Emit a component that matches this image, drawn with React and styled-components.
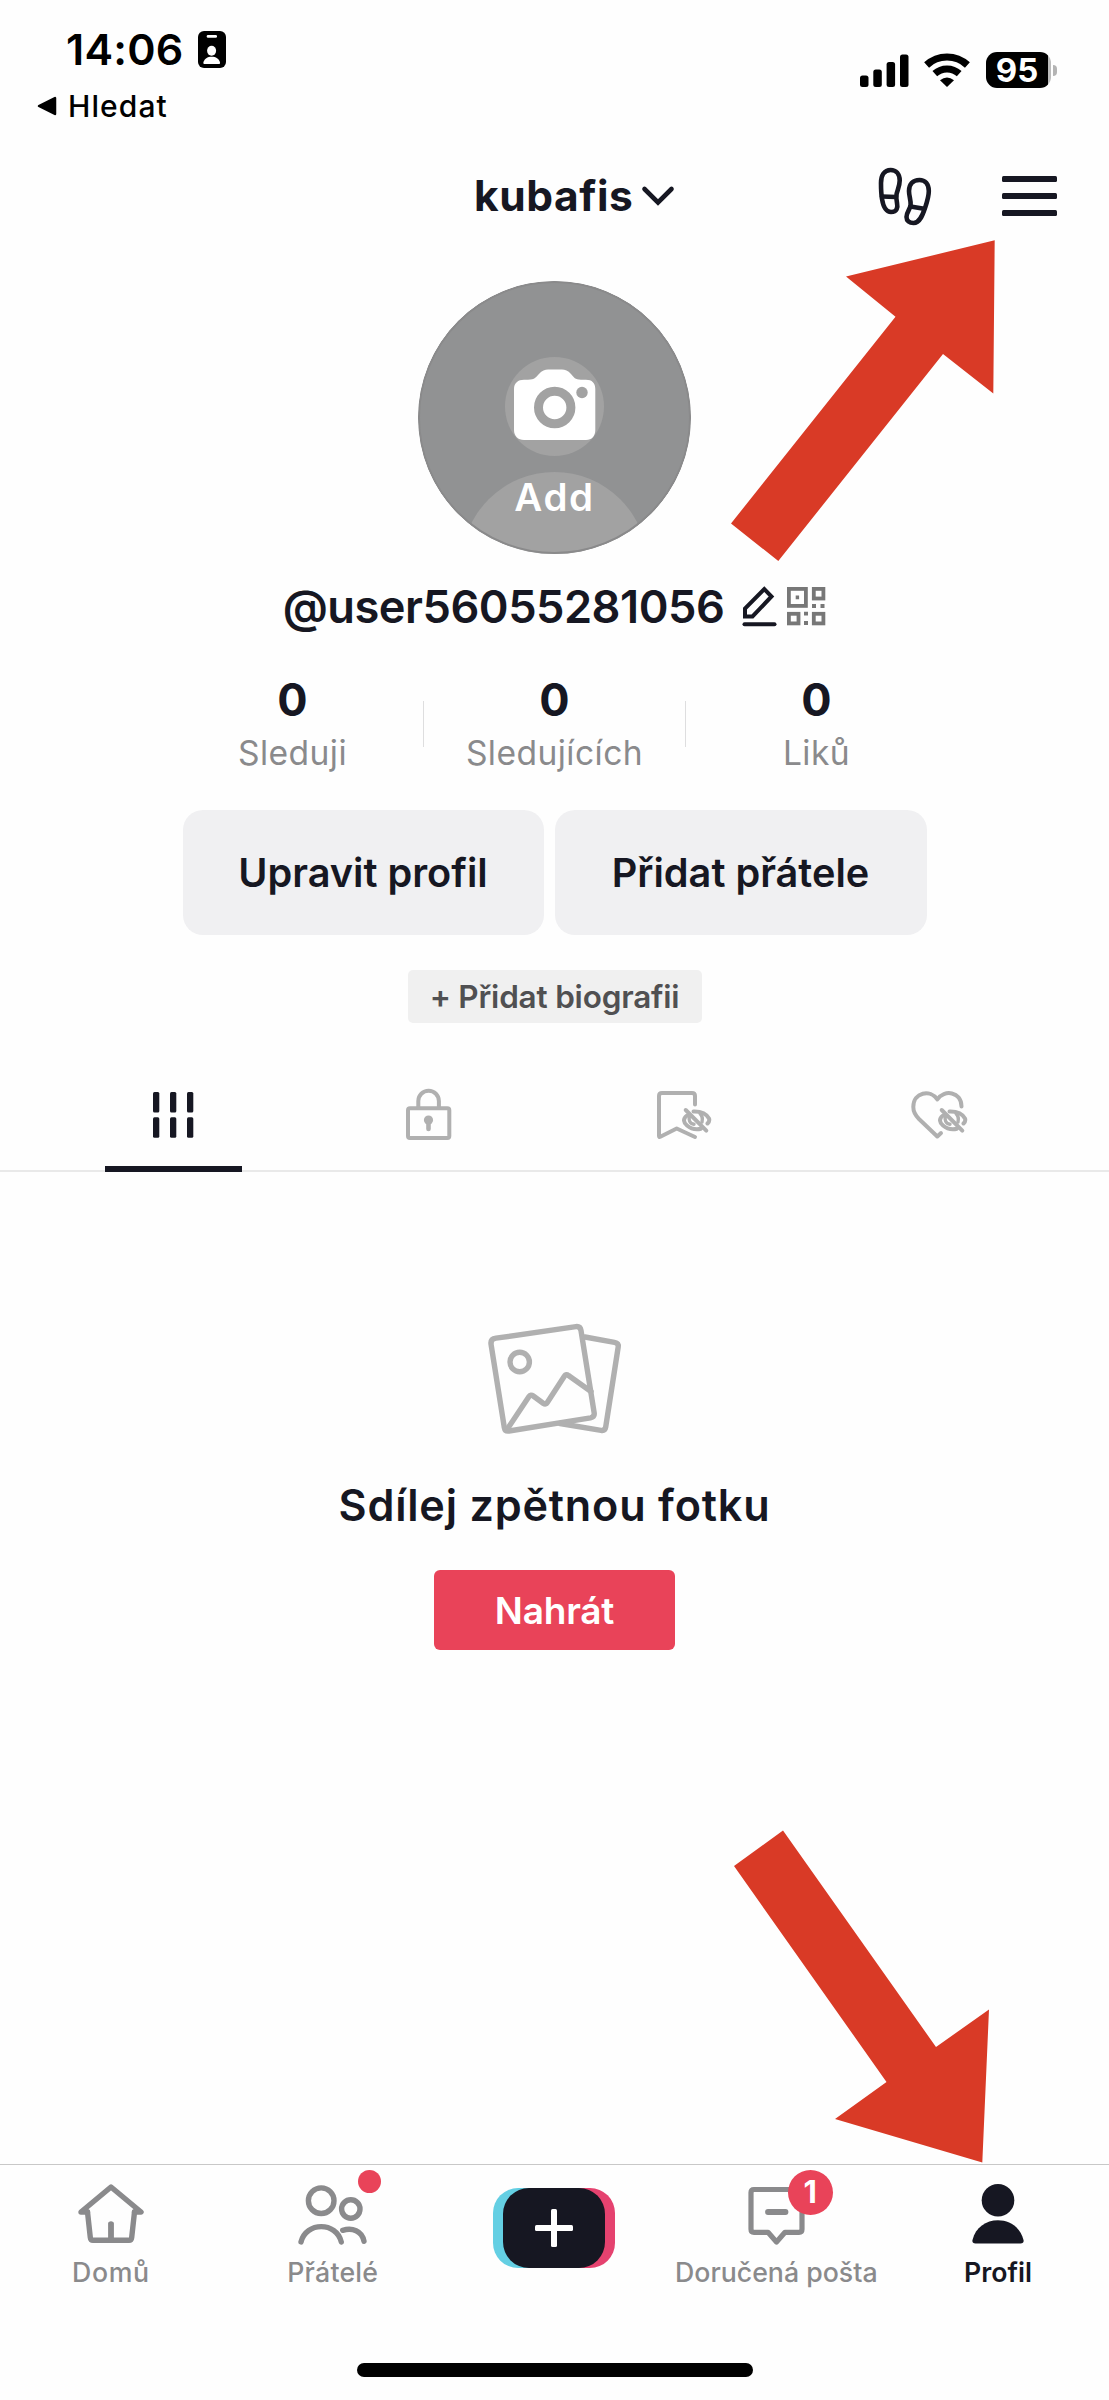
import React from 'react';
import styled, { createGlobalStyle } from 'styled-components';

const ink = '#161722';
const grey = '#8a8a8c';
const faint = '#b0b0b0';
const red = '#e94359';

const GlobalStyle = createGlobalStyle`
  * { box-sizing: border-box; }
  body {
    margin: 0;
    background: #fefefe;
    color: ${ink};
    font-family: Inter, "Liberation Sans", sans-serif;
    font-variant-ligatures: none;
  }
  button { border: 0; padding: 0; background: none; font: inherit; color: inherit; }
  svg { display: block; flex: none; }
`;

const Screen = styled.div`
  position: relative;
  display: flex;
  flex-direction: column;
  width: 1109px;
  height: 2400px;
  overflow: hidden;
`;

/* Status bar */
const StatusBar = styled.header`
  display: flex;
  justify-content: space-between;
  height: 140px;
  padding: 24px 52px 0 37px;
  color: #000;
`;
const StatusLeft = styled.div`
  display: flex;
  flex-direction: column;
  gap: 12px;
`;
const Clock = styled.div`
  display: flex;
  align-items: center;
  gap: 15px;
  height: 50px;
  padding-left: 29px;
  font-size: 43px;
  font-weight: 600;
  letter-spacing: 0.2px;
`;
const BackLink = styled.div`
  display: flex;
  align-items: center;
  gap: 11px;
  height: 40px;
  font-size: 30px;
  font-weight: 500;
  letter-spacing: 1.1px;
`;
const StatusRight = styled.div`
  display: flex;
  align-items: center;
  height: 40px;
  margin-top: 26px;
`;
const Battery = styled.div`
  display: flex;
  align-items: center;
  justify-content: center;
  width: 65px;
  height: 36px;
  padding-right: 3px;
  margin-left: 16px;
  border-radius: 11px;
  background: linear-gradient(to right, #000 62px, #bbb 62px);
  color: #fff;
  font-size: 33px;
  font-weight: 700;
  line-height: 36px;
`;
const BatteryNub = styled.div`
  width: 4px;
  height: 11px;
  margin: 0 0 0 2px;
  border-radius: 0 5px 5px 0;
  background: #b4b4b4;
`;

/* Top bar */
const TopBar = styled.div`
  display: flex;
  align-items: center;
  height: 112px;
  padding: 0 52px 0 474px;
`;
const AccountSwitch = styled.button`
  display: flex;
  align-items: center;
  gap: 8px;
  font-size: 42.5px;
  font-weight: 700;
  line-height: 50px;
  letter-spacing: 0.55px;
`;
const TopActions = styled.div`
  display: flex;
  align-items: center;
  gap: 70px;
  margin-left: auto;
`;

/* Profile */
const Profile = styled.section`
  display: flex;
  flex-direction: column;
  align-items: center;
`;
const Avatar = styled.button`
  position: relative;
  display: flex;
  flex-direction: column;
  align-items: center;
  width: 273px;
  height: 273px;
  margin-top: 29px;
  padding-top: 88px;
  border-radius: 50%;
  overflow: hidden;
  color: #fff;
`;
const AvatarBackdrop = styled.svg`
  position: absolute;
  inset: 0;
`;
const CameraIcon = styled.svg`
  position: relative;
`;
const AvatarLabel = styled.span`
  position: relative;
  margin-top: 31px;
  font-size: 38.5px;
  font-weight: 600;
  line-height: 50px;
  letter-spacing: 1.6px;
`;
const HandleRow = styled.div`
  display: flex;
  align-items: center;
  gap: 8px;
  height: 60px;
  margin-top: 22px;
`;
const Handle = styled.span`
  margin-right: 9px;
  font-size: 45.2px;
  font-weight: 600;
  letter-spacing: -0.5px;
`;
const Stats = styled.div`
  display: flex;
  margin-top: 39px;
`;
const Stat = styled.div`
  display: flex;
  flex-direction: column;
  align-items: center;
  width: 261px;
`;
const StatValue = styled.span`
  font-size: 45px;
  font-weight: 700;
  line-height: 49px;
`;
const StatLabel = styled.span`
  color: ${grey};
  font-size: 33.6px;
  line-height: 57px;
  letter-spacing: 0.45px;
`;
const StatDivider = styled.div`
  width: 1px;
  height: 46px;
  margin-top: 26px;
  background: #dededf;
`;
const Actions = styled.div`
  display: flex;
  gap: 11px;
  margin-top: 29px;
`;
const ActionButton = styled.button`
  width: ${(p) => (p.$wide ? 372 : 361)}px;
  height: 125px;
  border-radius: 20px;
  background: #f0f0f2;
  font-size: 39.7px;
  font-weight: 600;
`;
const BioButton = styled.button`
  width: 294px;
  height: 53px;
  margin-top: 35px;
  border-radius: 5px;
  background: #f0f0f0;
  color: #505052;
  font-size: 31.5px;
  font-weight: 600;
  letter-spacing: -0.2px;
`;

/* Content tabs */
const Tabs = styled.div`
  display: flex;
  height: 130px;
  margin-top: 19px;
  padding: 0 43px 0 46px;
  border-bottom: 2px solid #e9e9e9;
`;
const Tab = styled.button`
  display: flex;
  flex: 1;
  flex-direction: column;
  align-items: center;
  justify-content: space-between;
  height: 130px;
  padding-top: 46px;
`;
const TabIcon = styled.div`
  display: flex;
  align-items: center;
  height: 54px;
`;
const TabIndicator = styled.div`
  width: 137px;
  height: 6px;
  background: ${ink};
`;

/* Empty state */
const EmptyState = styled.section`
  display: flex;
  flex: 1;
  flex-direction: column;
  align-items: center;
  padding-top: 150px;
`;
const EmptyTitle = styled.h2`
  margin: 45px 0 40px;
  font-size: 43.2px;
  font-weight: 600;
  line-height: 50px;
  letter-spacing: 0.8px;
`;
const UploadButton = styled.button`
  width: 241px;
  height: 80px;
  border-radius: 6px;
  background: ${red};
  color: #fff;
  font-size: 37px;
  font-weight: 600;
  letter-spacing: -0.2px;
`;

/* Bottom navigation */
const BottomBar = styled.footer`
  display: flex;
  flex-direction: column;
  align-items: center;
  height: 236px;
  border-top: 1px solid #c8c8c8;
`;
const NavRow = styled.nav`
  display: flex;
  width: 100%;
  height: 198px;
`;
const NavItem = styled.button`
  display: flex;
  flex: 1;
  flex-direction: column;
  align-items: center;
  padding-top: 15px;
  color: ${(p) => (p.$active ? ink : grey)};
  white-space: nowrap;
`;
const NavIcon = styled.div`
  position: relative;
`;
const NavLabel = styled.span`
  margin-top: 6px;
  font-size: 26.7px;
  font-weight: ${(p) => (p.$active ? 600 : 500)};
  line-height: 36px;
  letter-spacing: ${(p) => p.$spacing || 0}px;
`;
const Dot = styled.span`
  position: absolute;
  top: -10px;
  left: 60px;
  width: 23px;
  height: 23px;
  border-radius: 50%;
  background: ${red};
`;
const Count = styled.span`
  position: absolute;
  top: -10.5px;
  left: 40px;
  width: 45px;
  height: 45px;
  border-radius: 50%;
  background: ${red};
  color: #fff;
  font-size: 31px;
  font-weight: 700;
  line-height: 44px;
  text-align: center;
`;
const CreateButton = styled.span`
  display: block;
  margin-top: 8px;
  padding: 0 10px;
  border-radius: 25px;
  background: linear-gradient(to right, #64cfe3 50%, #e5426f 50%);
`;
const CreateFace = styled.span`
  display: flex;
  align-items: center;
  justify-content: center;
  width: 102px;
  height: 80px;
  border-radius: 26px;
  background: ${ink};
`;
const HomeIndicator = styled.div`
  width: 396px;
  height: 14px;
  border-radius: 7px;
  background: #000;
`;

const Pointers = styled.svg`
  position: absolute;
  inset: 0;
  pointer-events: none;
`;

const line = (color, width) => ({
  fill: 'none',
  stroke: color,
  strokeWidth: width,
  strokeLinecap: 'round',
  strokeLinejoin: 'round',
});

const IdBadge = () => (
  <svg width="28" height="37" viewBox="0 0 28 37">
    <rect width="28" height="37" rx="6" />
    <rect x="8.7" y="4" width="10.3" height="2.8" rx="1.3" fill="#fff" />
    <ellipse cx="13.6" cy="19.7" rx="4.5" ry="5" fill="#fff" />
    <path d="M6.5 33c-1 0-1.3-.6-1.1-1.500C6.300 27.500 9.500 25.700 13.700 25.700s7.400 1.800 8.300 5.800c.2.9-.1 1.500-1.100 1.500z" fill="#fff" />
  </svg>
);

const BackTriangle = () => (
  <svg width="20" height="20" viewBox="0 0 20 20">
    <path d="M2 10 18 2v16z" stroke="#000" strokeWidth="2.500" strokeLinejoin="round" />
  </svg>
);

const Signal = () => (
  <svg width="49" height="33" viewBox="0 0 49 33">
    <rect y="21.500" width="8.500" height="11.500" rx="2.500" />
    <rect x="13.300" y="15.500" width="8.500" height="17.500" rx="2.500" />
    <rect x="26.600" y="8" width="8.500" height="25" rx="2.500" />
    <rect x="40" y="0.500" width="8.500" height="32.500" rx="2.500" />
  </svg>
);

const WifiMark = styled.svg`
  margin-left: 15px;
`;
const Wifi = () => (
  <WifiMark width="46" height="35" viewBox="0 0 46 35">
    <path d="M2.600 12A30 30 0 0 1 43.400 12" fill="none" stroke="#000" strokeWidth="7.200" />
    <path d="M10.800 20.600A18.200 18.200 0 0 1 35.200 20.600" fill="none" stroke="#000" strokeWidth="7" />
    <path d="M23 34 16 27.300Q23 21.500 30 27.300z" />
  </WifiMark>
);

const Chevron = () => (
  <svg width="34" height="24" viewBox="0 0 34 24">
    <path d="M3.500 5 17 18.500 30.500 5" fill="none" stroke={ink} strokeWidth="4.600" strokeLinecap="round" />
  </svg>
);

const Footprints = () => (
  <svg width="54" height="60" viewBox="0 0 54 60" {...line(ink, 4.6)}>
    <path d="M12.700 4C6 4 3 10 3 17c0 6 .2 11 1 16 1 6 3 13 9 13s7-4.500 6-9c-.7-3.500-1-6-.4-9 .9-4 3.100-8 3.100-13.500C21.700 8 18 4 12.700 4z" />
    <path d="M4 30.500l14 .5" />
    <path d="M41.500 14C35 14 31 18 31 25c0 5 2 9 1.600 14-.3 4-4.100 7-4.100 12 0 4 3 6 7 6 6.500 0 9.500-9 11.500-15s3.800-11 3.800-17c0-7-3.800-11-9.300-11z" />
    <path d="M32.500 40.500l13.500 2.300" />
  </svg>
);

const MenuIcon = () => (
  <svg width="55" height="40" viewBox="0 0 55 40" fill={ink}>
    <rect width="55" height="6" rx="1.500" />
    <rect y="17" width="55" height="6" rx="1.500" />
    <rect y="34" width="55" height="6" rx="1.500" />
  </svg>
);

const Pencil = () => (
  <svg width="38" height="42" viewBox="0 0 38 42" {...line(ink, 4)}>
    <path d="M4 31.500V23.500L23.300 4 30.500 11.500 11.500 31.500z" strokeLinejoin="miter" />
    <path d="M3.500 39.300H33.500" />
  </svg>
);

const QrCode = () => (
  <svg width="39" height="39" viewBox="0 0 39 39" fill="none" stroke="#777" strokeWidth="3.800">
    <rect x="1.900" y="1.900" width="17" height="17" />
    <rect x="26.800" y="1.900" width="9.600" height="9.600" />
    <rect x="1.900" y="26.800" width="9.600" height="9.600" />
    <rect x="26.800" y="26.800" width="9.600" height="9.600" />
    <path d="M8.700 10.400h3.400M25 19h4M33.500 19h4M17 26.700h4M17 36h4" />
  </svg>
);

const GridIcon = () => (
  <svg width="41" height="46" viewBox="0 0 41 46" fill={ink}>
    {[0, 17, 34].map((x) => (
      <React.Fragment key={x}>
        <rect x={x} width="6.300" height="20.500" rx="1.500" />
        <rect x={x} y="25.300" width="6.300" height="20.500" rx="1.500" />
      </React.Fragment>
    ))}
  </svg>
);

const LockIcon = () => (
  <svg width="47" height="54" viewBox="0 0 47 54" {...line(faint, 4)}>
    <rect x="3" y="20.300" width="41.300" height="29.800" rx="2" />
    <path d="M13.300 20V13a10.300 10.300 0 0 1 20.600 0V20" />
    <circle cx="23.500" cy="32" r="4.600" fill={faint} stroke="none" />
    <path d="M23.500 33V41" strokeWidth="4.600" />
  </svg>
);

const HiddenEye = ({ x = 0 }) => (
  <g transform={`translate(${x} 0)`}>
    <path d="M29.700 22 50.300 42.700" />
    <path d="M31 27.500C26.500 31 27.500 34.500 31 37.500 35 41 39.500 42 45 40.800" />
    <path d="M37.500 23.500C45 23.300 50.500 26 53 30.500 53.800 32.500 53 34 51.500 35.500" />
    <path d="M33.500 27.500C32.500 32 33.500 35.800 38 36.200" strokeWidth="3.400" />
    <path d="M44 25.500C46.500 28 46.700 31 46 34" strokeWidth="3.400" />
  </g>
);

const BookmarkHidden = () => (
  <svg width="56" height="54" viewBox="0 0 56 54" {...line(faint, 4)}>
    <path d="M39 16.500V8q0-3-3-3H6Q3 5 3 8V48q0 1.500 1.300.8L20.700 40.500 39 49" />
    <HiddenEye />
  </svg>
);

const HeartHidden = () => (
  <svg width="58" height="54" viewBox="0 0 58 54" {...line(faint, 4)}>
    <path d="M51.500 18.500C51.500 3.500 34 1 27.300 11.500 20.500 1 3.300 4 3.300 19 3.300 24.500 5.500 27.500 9 31L27.300 48.500 31 45" />
    <HiddenEye x={2} />
  </svg>
);

const GalleryIcon = () => (
  <svg width="136" height="113" viewBox="0 0 136 113" {...line(faint, 5.4)}>
    <path d="M9 16.200 89 4.600Q93.300 4.200 94 8.500L107.200 91Q107.700 95 103.500 95.800L22 109Q18 109.600 17.300 105.500L4 22Q3.400 17 9 16.200z" />
    <path d="M98 15 127.500 20.300Q131.800 21 131.200 25L118.700 105Q118 109 114 108.300L73 101.500" />
    <circle cx="32.700" cy="40" r="9.700" />
    <path d="M20 107.500 42 74.500Q43.700 72 46.300 74L56.500 81.500Q58.700 83 60.300 80.500L77.500 54Q79 51.500 81.500 53.500L104 69.500" />
  </svg>
);

const HomeIcon = () => (
  <svg width="66" height="68" viewBox="0 0 66 68" {...line('currentColor', 5.4)}>
    <path d="M9.500 32H3L33 7 63 32H56.500" />
    <path d="M9.500 32 12.300 57.500Q12.600 60.300 15 60.300H51Q53.400 60.300 53.700 57.500L56.500 32" />
    <path d="M33 42.500V60" strokeLinecap="butt" />
    <path d="M33 44V60" />
  </svg>
);

const FriendsIcon = () => (
  <svg width="69" height="68" viewBox="0 0 69 68" {...line('currentColor', 5.4)}>
    <circle cx="23.200" cy="20.700" r="12.800" />
    <circle cx="52.800" cy="29" r="9.200" />
    <path d="M3 62C8 41.500 38.500 41.500 43.300 62" />
    <path d="M44.700 50.300C54 47.500 64 50.500 66 61.300" />
  </svg>
);

const PlusIcon = () => (
  <svg width="38" height="38" viewBox="0 0 38 38" fill="#fff">
    <rect x="16" width="6" height="38" rx="1.500" />
    <rect y="16" width="38" height="6" rx="1.500" />
  </svg>
);

const InboxIcon = () => (
  <svg width="57" height="68" viewBox="0 0 57 68" {...line('currentColor', 5.2)}>
    <path d="M6 9.500H51Q54 9.500 54 12.500V49.300Q54 52.300 51 52.300H37L28.500 62 20 52.300H6Q3 52.300 3 49.300V12.500Q3 9.500 6 9.500z" />
    <path d="M20 32H37.500" strokeWidth="5.800" />
  </svg>
);

const PersonIcon = () => (
  <svg width="52" height="68" viewBox="0 0 52 68" fill={ink}>
    <circle cx="26" cy="20.300" r="16.300" />
    <path d="M3.500 63.500Q-.3 63.500.5 60C3.500 47.500 14 40.300 26 40.300S48.500 47.500 51.500 60Q52.300 63.500 48.500 63.500z" />
  </svg>
);

const stats = [
  ['0', 'Sleduji'],
  ['0', 'Sledujících'],
  ['0', 'Liků'],
];

export default function App() {
  return (
    <Screen>
      <GlobalStyle />
      <StatusBar>
        <StatusLeft>
          <Clock>
            <span>14:06</span>
            <IdBadge />
          </Clock>
          <BackLink>
            <BackTriangle />
            <span>Hledat</span>
          </BackLink>
        </StatusLeft>
        <StatusRight>
          <Signal />
          <Wifi />
          <Battery>95</Battery>
          <BatteryNub />
        </StatusRight>
      </StatusBar>

      <TopBar>
        <AccountSwitch>
          <span>kubafis</span>
          <Chevron />
        </AccountSwitch>
        <TopActions>
          <Footprints />
          <MenuIcon />
        </TopActions>
      </TopBar>

      <Profile>
        <Avatar>
          <AvatarBackdrop width="273" height="273" viewBox="0 0 273 273">
            <circle cx="136.500" cy="136.500" r="136.500" fill="#919293" />
            <circle cx="136.500" cy="125.500" r="49.500" fill="#a2a2a2" />
            <circle cx="136.500" cy="284" r="93" fill="#a2a2a2" />
            <circle cx="136.500" cy="136.500" r="135.500" fill="none" stroke="#8a8a8b" strokeWidth="2" />
          </AvatarBackdrop>
          <CameraIcon width="82" height="72" viewBox="0 0 82 72">
            <path
              d="M10 10.700H14C21 10.700 22 8 25 5 28 1.500 31 .5 34 .5H48C51 .5 54 1.500 57 5 60 8.500 61 10.700 67 10.700H72C78 10.700 81.300 14 81.300 20V61C81.300 67 78 71 72 71H10C4 71 0 67 0 61V20C0 14 4 10.700 10 10.700z"
              fill="#fff"
            />
            <circle cx="40.700" cy="38.500" r="16.200" fill="none" stroke="#a2a2a2" strokeWidth="9" />
            <circle cx="68" cy="23.500" r="5.700" fill="#a2a2a2" />
          </CameraIcon>
          <AvatarLabel>Add</AvatarLabel>
        </Avatar>

        <HandleRow>
          <Handle>@user56055281056</Handle>
          <Pencil />
          <QrCode />
        </HandleRow>

        <Stats>
          {stats.map(([value, label], i) => (
            <React.Fragment key={label}>
              {i > 0 && <StatDivider />}
              <Stat>
                <StatValue>{value}</StatValue>
                <StatLabel>{label}</StatLabel>
              </Stat>
            </React.Fragment>
          ))}
        </Stats>

        <Actions>
          <ActionButton>Upravit profil</ActionButton>
          <ActionButton $wide>Přidat přátele</ActionButton>
        </Actions>

        <BioButton>+ Přidat biografii</BioButton>
      </Profile>

      <Tabs>
        <Tab>
          <TabIcon><GridIcon /></TabIcon>
          <TabIndicator />
        </Tab>
        <Tab><TabIcon><LockIcon /></TabIcon></Tab>
        <Tab><TabIcon><BookmarkHidden /></TabIcon></Tab>
        <Tab><TabIcon><HeartHidden /></TabIcon></Tab>
      </Tabs>

      <EmptyState>
        <GalleryIcon />
        <EmptyTitle>Sdílej zpětnou fotku</EmptyTitle>
        <UploadButton>Nahrát</UploadButton>
      </EmptyState>

      <BottomBar>
        <NavRow>
          <NavItem>
            <NavIcon><HomeIcon /></NavIcon>
            <NavLabel $spacing={0.7}>Domů</NavLabel>
          </NavItem>
          <NavItem>
            <NavIcon><FriendsIcon /><Dot /></NavIcon>
            <NavLabel $spacing={0.2}>Přátelé</NavLabel>
          </NavItem>
          <NavItem>
            <CreateButton>
              <CreateFace><PlusIcon /></CreateFace>
            </CreateButton>
          </NavItem>
          <NavItem>
            <NavIcon><InboxIcon /><Count>1</Count></NavIcon>
            <NavLabel>Doručená pošta</NavLabel>
          </NavItem>
          <NavItem $active>
            <NavIcon><PersonIcon /></NavIcon>
            <NavLabel $active>Profil</NavLabel>
          </NavItem>
        </NavRow>
        <HomeIndicator />
      </BottomBar>

      <Pointers width="1109" height="2400" viewBox="0 0 1109 2400" fill="#d93a26">
        <path d="M994.700 240.300 993.300 393.500 943 354 778.300 561 731 523.500 895.500 316.700 846 276.500z" />
        <path d="M783 1830.500 936 2047 989 2009.500 982.300 2162.500 835 2119 886.500 2082 734 1866z" />
      </Pointers>
    </Screen>
  );
}
